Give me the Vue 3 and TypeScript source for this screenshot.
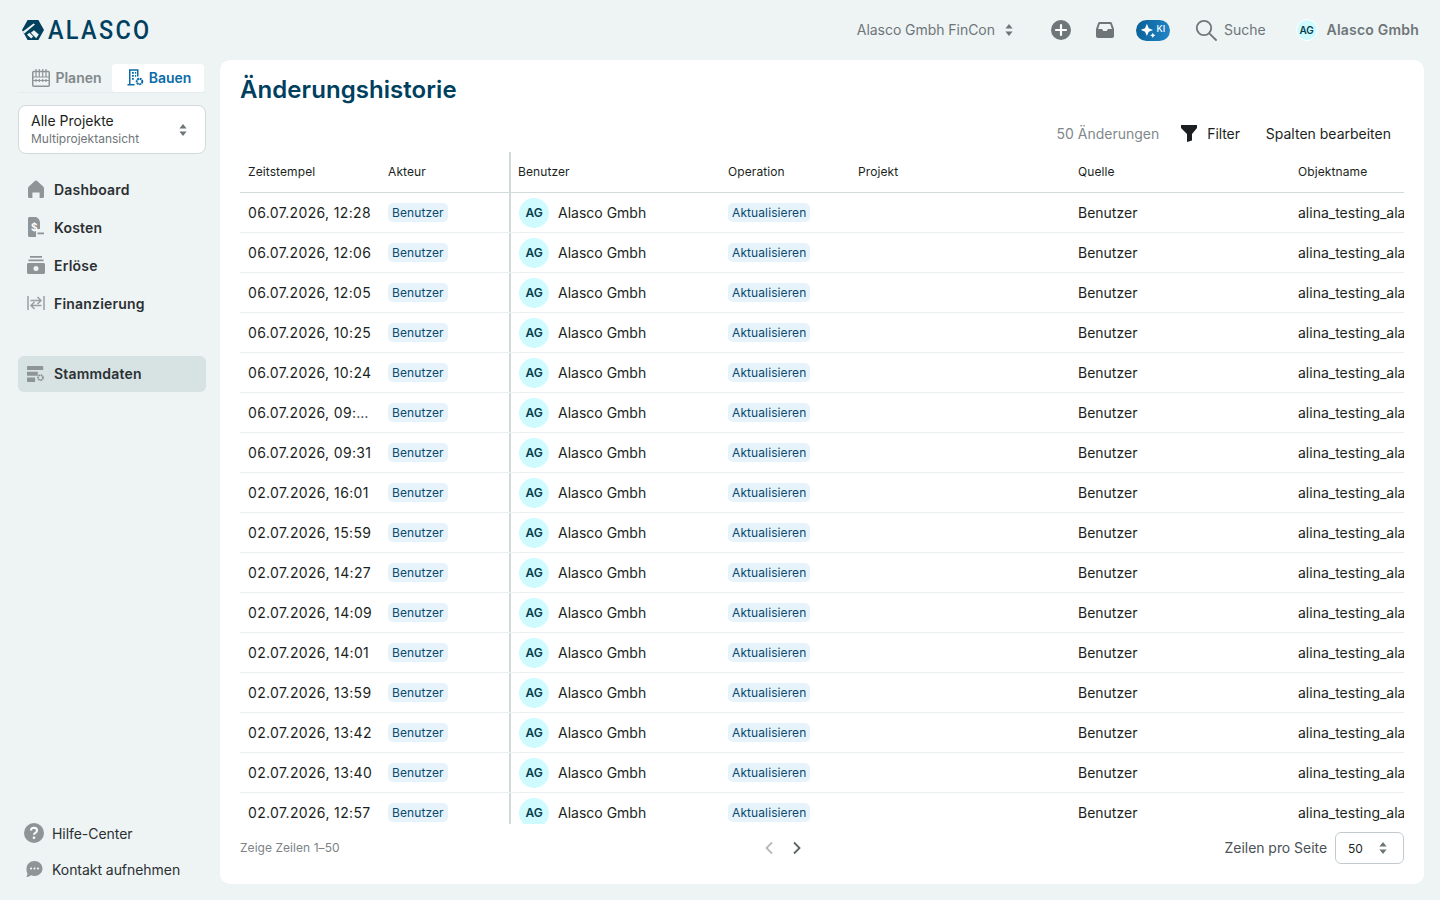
<script setup lang="ts">
const times = [
  '06.07.2026, 12:28', '06.07.2026, 12:06', '06.07.2026, 12:05', '06.07.2026, 10:25',
  '06.07.2026, 10:24', '06.07.2026, 09:…', '06.07.2026, 09:31', '02.07.2026, 16:01',
  '02.07.2026, 15:59', '02.07.2026, 14:27', '02.07.2026, 14:09', '02.07.2026, 14:01',
  '02.07.2026, 13:59', '02.07.2026, 13:42', '02.07.2026, 13:40', '02.07.2026, 12:57',
]
const columns = ['Zeitstempel', 'Akteur', 'Benutzer', 'Operation', 'Projekt', 'Quelle', 'Objektname']
</script>

<template>
  <div class="page">
    <header class="topbar">
      <div class="logo">
        <svg width="22" height="20" viewBox="0 0 22 20">
          <path fill="#00405f" d="M5.600 0h10.800L22 10l-5.600 10H5.600L0 10z" />
          <path fill="#eef3f4" d="M.6 11.800 11.500 3.400l1.500 1.200L2.300 13.600zM8.800 12.800l3.200-2.600 4.800 4.400-2.600 3.600zM5 14.800l2.400-2 3.800 3.600-2 2.200z" />
        </svg>
        <span>ALASCO</span>
      </div>
      <div class="top-right">
        <div class="tenant">
          <span>Alasco Gmbh FinCon</span>
          <svg class="updown" width="8" height="12" viewBox="0 0 8 12"><path fill="#6f7679" d="M4 0l3.600 4.400H.4zM4 12L.4 7.600h7.200z" /></svg>
        </div>
        <svg class="t-add" width="20" height="20" viewBox="0 0 20 20">
          <circle cx="10" cy="10" r="10" fill="#6f7679" />
          <path d="M10 5v10M5 10h10" stroke="#fff" stroke-width="2.200" stroke-linecap="round" />
        </svg>
        <svg class="t-inbox" width="18" height="16" viewBox="0 0 18 16">
          <path fill="#6f7679" d="M3.500 0h11c.6 0 1 .3 1.300.8L18 7v7c0 1.100-.9 2-2 2H2c-1.100 0-2-.9-2-2V7L2.200.8C2.500.3 2.900 0 3.500 0z" />
          <path fill="#eef3f4" d="M3.800 2h10.400l1.700 5H12l-1.300 2H7.300L6 7H2.100z" />
        </svg>
        <div class="ai">
          <svg width="15" height="15" viewBox="0 0 14 14">
            <path fill="#fff" d="M5.500.8 7.200 4.800l4 1.700-4 1.700-1.700 4-1.700-4-4-1.700 4-1.700zM11 9l.8 1.700 1.700.8-1.700.8L11 14l-.8-1.700-1.700-.8 1.700-.8z" />
          </svg>
          <span>KI</span>
        </div>
        <div class="search">
          <svg width="22" height="22" viewBox="0 0 22 22">
            <circle cx="9" cy="9" r="7.200" fill="none" stroke="#6f7679" stroke-width="1.800" />
            <path d="M14.300 14.300 21 21" stroke="#6f7679" stroke-width="1.800" stroke-linecap="round" />
          </svg>
          <span>Suche</span>
        </div>
        <div class="account">
          <span class="avatar small">AG</span>
          <span class="account-name">Alasco Gmbh</span>
        </div>
      </div>
    </header>

    <div class="body">
      <aside class="sidebar">
        <div class="mode">
          <div class="mode-item">
            <svg width="18" height="18" viewBox="0 0 18 18" fill="none" stroke="#8f9597" stroke-width="1.500">
              <rect x=".75" y="2.500" width="16.500" height="14.750" rx="1" />
              <path d="M4 0v8M7.300 0v8M10.700 0v8M14 0v8M1 8h16M1 11.500h16M4 10v3M7.300 10v3M10.700 10v3M14 10v3" stroke-width="1.200" />
            </svg>
            <span>Planen</span>
          </div>
          <div class="mode-item active">
            <svg width="17" height="17" viewBox="0 0 17 17">
              <path fill="none" stroke="#0a6ca8" stroke-width="1.500" d="M2.750 15.500V1h8v6.500M.5 15.800h7" />
              <path fill="#0a6ca8" d="M5 3h1.800v1.800H5zM8 3h1.200v1.800H8zM5 6h1.800v1.800H5zM8 6h1.200v1.800H8zM5 9h1.800v1.800H5z" />
              <circle cx="12.500" cy="12.500" r="2.800" fill="none" stroke="#0a6ca8" stroke-width="2" stroke-dasharray="2 .6" />
            </svg>
            <span>Bauen</span>
          </div>
        </div>

        <div class="project">
          <div class="project-text">
            <div class="project-name">Alle Projekte</div>
            <div class="project-sub">Multiprojektansicht</div>
          </div>
          <svg class="updown" width="8" height="12" viewBox="0 0 8 12"><path fill="#6f7679" d="M4 0l3.600 4.400H.4zM4 12L.4 7.600h7.200z" /></svg>
        </div>

        <nav class="nav">
          <a class="nav-item">
            <svg width="18" height="18" viewBox="0 0 18 18"><path fill="#8f9597" d="M9 .5c.6 0 1.100.3 1.500.7l5.600 5.300c.6.500.9 1.200.9 2v8c0 .9-.7 1.500-1.500 1.500h-2.900v-5.500H5.400V18H2.500C1.600 18 1 17.400 1 16.500v-8c0-.8.3-1.500.9-2l5.600-5.300C7.900.8 8.400.5 9 .5z" /></svg>
            <span>Dashboard</span>
          </a>
          <a class="nav-item">
            <svg width="18" height="20" viewBox="0 0 18 20">
              <path fill="#8f9597" d="M2.500 0H8c2.500 0 5 2.500 5 5.500V12H9v8H2.500C1.700 20 1 19.300 1 18.500v-17C1 .7 1.700 0 2.500 0z" />
              <path fill="#8f9597" d="M10.500 15.500H17v1.800h-6.500z" />
              <text x="4" y="13.500" font-size="10" font-weight="700" fill="#fff" font-family="Inter, sans-serif">$</text>
            </svg>
            <span>Kosten</span>
          </a>
          <a class="nav-item">
            <svg width="18" height="18" viewBox="0 0 18 18">
              <path fill="#8f9597" d="M3 0h12v1.700H3zM1.500 3.600h15v1.700h-15zM1.500 7h15c.8 0 1.500.7 1.500 1.500v8c0 .8-.7 1.500-1.500 1.500h-15C.7 18 0 17.300 0 16.500v-8C0 7.700.7 7 1.500 7z" />
              <circle cx="9" cy="12.500" r="2.500" fill="#eef3f4" />
            </svg>
            <span>Erlöse</span>
          </a>
          <a class="nav-item">
            <svg width="18" height="16" viewBox="0 0 18 16" fill="none" stroke="#9aa0a2" stroke-width="1.500">
              <path d="M1 1v14M17 1v14M3.500 5.500H14M10.500 2 14 5.500 10.500 9M4 10.500h10.500M7.500 7 4 10.500 7.500 14" />
            </svg>
            <span>Finanzierung</span>
          </a>
        </nav>

        <a class="nav-item master">
          <svg width="20" height="18" viewBox="0 0 20 18">
            <path fill="#8f9597" d="M1 0h16c.6 0 1 .4 1 1v3.500H0V1c0-.6.400-1 1-1zM0 6.500h12v4.500H0zM0 13h9v5H1c-.6 0-1-.4-1-1z" />
            <circle cx="15" cy="13" r="2.800" fill="none" stroke="#8f9597" stroke-width="2" stroke-dasharray="2 .6" />
          </svg>
          <span>Stammdaten</span>
        </a>

        <div class="help">
          <a class="help-item">
            <svg width="20" height="20" viewBox="0 0 20 20">
              <circle cx="10" cy="10" r="10" fill="#8f9597" />
              <path d="M7 7.500C7 5.800 8.300 4.800 10 4.800s3 1 3 2.600c0 2.300-3 2.300-3 4.300" fill="none" stroke="#fff" stroke-width="2" />
              <circle cx="10" cy="14.800" r="1.300" fill="#fff" />
            </svg>
            <span>Hilfe-Center</span>
          </a>
          <a class="help-item">
            <svg width="20" height="18" viewBox="0 0 20 18">
              <path fill="#8f9597" d="M10.500 1c4.400 0 8 3.200 8 7.500s-3.600 7.500-8 7.500c-1.300 0-2.500-.3-3.500-.8C5.800 16.300 4 17 2.400 17c.7-1 1.100-2.200 1.100-3.500-.9-1.300-1-3.200-1-5C2.500 4.200 6.100 1 10.500 1z" />
              <circle cx="7" cy="8.500" r="1" fill="#fff" /><circle cx="10.500" cy="8.500" r="1" fill="#fff" /><circle cx="14" cy="8.500" r="1" fill="#fff" />
            </svg>
            <span>Kontakt aufnehmen</span>
          </a>
        </div>
      </aside>

      <main class="card">
        <h1>Änderungshistorie</h1>
        <div class="toolbar">
          <span class="count">50 Änderungen</span>
          <span class="tool filter">
            <svg width="16" height="17" viewBox="0 0 16 17"><path fill="#1b1f21" d="M0 0h16v3l-5 6v6.500L6 17V9L0 3z" /></svg>
            Filter
          </span>
          <span class="tool edit">Spalten bearbeiten</span>
        </div>

        <div class="table">
          <div class="row head">
            <div v-for="c in columns" :key="c" class="cell" :class="{ split: c === 'Benutzer' }">{{ c }}</div>
          </div>
          <div class="rows">
            <div v-for="(t, i) in times" :key="i" class="row">
              <div class="cell time">{{ t }}</div>
              <div class="cell"><span class="chip">Benutzer</span></div>
              <div class="cell split user"><span class="avatar">AG</span>Alasco Gmbh</div>
              <div class="cell"><span class="chip">Aktualisieren</span></div>
              <div class="cell"></div>
              <div class="cell">Benutzer</div>
              <div class="cell obj">alina_testing_alasco</div>
            </div>
          </div>
        </div>

        <footer class="pager">
          <span class="range">Zeige Zeilen 1–50</span>
          <div class="arrows">
            <svg width="10" height="14" viewBox="0 0 10 14" fill="none" stroke="#b4b9bb" stroke-width="1.800"><path d="M8 1.500 2.500 7 8 12.500" /></svg>
            <svg width="10" height="14" viewBox="0 0 10 14" fill="none" stroke="#5b6265" stroke-width="1.800"><path d="M2 1.500 7.500 7 2 12.500" /></svg>
          </div>
          <div class="per-page">
            <span>Zeilen pro Seite</span>
            <div class="select">
              <span>50</span>
              <svg class="updown" width="8" height="12" viewBox="0 0 8 12"><path fill="#6f7679" d="M4 0l3.600 4.400H.4zM4 12L.4 7.600h7.200z" /></svg>
            </div>
          </div>
        </footer>
      </main>
    </div>
  </div>
</template>

<style>
html, body { margin: 0; background: #eef3f4; }
</style>

<style scoped>
.page {
  width: 1440px;
  height: 900px;
  overflow: hidden;
  display: flex;
  flex-direction: column;
  background: #eef3f4;
  color: #1b1f21;
  font-family: Inter, "Liberation Sans", sans-serif;
  font-size: 14px;
}

.topbar {
  height: 60px;
  flex: none;
  display: flex;
  align-items: center;
  justify-content: space-between;
  padding: 0 21px 0 22px;
}
.logo { display: flex; align-items: center; gap: 4px; color: #00405f; }
.logo span {
  font-family: Roboto, sans-serif;
  font-size: 26px;
  font-weight: 500;
  letter-spacing: 2.600px;
  line-height: 1;
  display: inline-block;
  transform: scaleX(.9);
  transform-origin: left center;
}
.top-right { display: flex; align-items: center; color: #6f7679; font-weight: 500; }
.top-right span { margin-top: -2px; }
.tenant { display: flex; align-items: center; gap: 10px; font-weight: 400; letter-spacing: -.05px; }
.t-add { margin-left: 38px; }
.t-inbox { margin-left: 25px; }
.ai {
  margin-left: 22px;
  width: 34px;
  height: 21px;
  border-radius: 11px;
  background: linear-gradient(100deg, #0a5f97, #2186c8);
  display: flex;
  align-items: center;
  justify-content: center;
  gap: 1px;
  color: #fff;
  font-size: 9px;
  box-sizing: border-box;
}
.ai span { margin-top: -4px; }
.search { margin-left: 25px; display: flex; align-items: center; gap: 7px; font-weight: 400; }
.account { margin-left: 30px; display: flex; align-items: center; gap: 9px; font-weight: 600; }
.account-name { letter-spacing: .2px; }

.avatar {
  width: 30px;
  height: 30px;
  border-radius: 50%;
  background: #cffafe;
  color: #063f4f;
  display: inline-flex;
  align-items: center;
  justify-content: center;
  font-size: 12px;
  font-weight: 600;
  flex: none;
}
.top-right .avatar.small {
  width: 22px;
  height: 22px;
  margin-top: 0;
  font-size: 10px;
  border: 1px solid #fff;
  box-sizing: border-box;
}

.body { flex: 1; display: flex; min-height: 0; }

.sidebar {
  width: 188px;
  flex: none;
  padding: 4px 14px 21px 18px;
  display: flex;
  flex-direction: column;
}
.mode {
  display: flex;
  height: 28px;
  padding: 0 2px;
  border-bottom: 1px solid #e6ecee;
}
.mode-item {
  width: 92px;
  display: flex;
  align-items: center;
  justify-content: center;
  gap: 5px;
  padding: 0 0 1px 2px;
  box-sizing: border-box;
  color: #81888b;
  font-weight: 600;
  border-radius: 3px;
}
.mode-item.active { background: #fff; color: #0a6ca8; }

.project {
  margin-top: 12px;
  height: 47px;
  border: 1px solid #d3dadc;
  border-radius: 8px;
  background: #fff;
  display: flex;
  align-items: center;
  justify-content: space-between;
  padding: 0 18px 0 12px;
}
.project-name { font-size: 14px; line-height: 18px; }
.project-sub { font-size: 12px; line-height: 17px; color: #6f7679; }

.nav { margin-top: 17px; display: flex; flex-direction: column; gap: 2px; }
.nav-item {
  height: 36px;
  display: flex;
  align-items: center;
  padding-left: 9px;
  border-radius: 6px;
  font-weight: 600;
  letter-spacing: .2px;
  color: #2b3033;
  gap: 9px;
}
.nav-item svg { width: 18px; flex: none; }
.master { margin-top: 35px; background: #d7e2e3; }
.master span { margin-top: -2px; }

.help { margin-top: auto; display: flex; flex-direction: column; gap: 16px; padding-left: 6px; }
.help-item { height: 20px; display: flex; align-items: center; gap: 8px; color: #2b3033; letter-spacing: -.05px; }

.card {
  width: 1204px;
  height: 824px;
  flex: none;
  box-sizing: border-box;
  padding: 0 20px;
  background: #fff;
  border-radius: 10px;
  display: flex;
  flex-direction: column;
}
h1 {
  margin: 0;
  padding-top: 15px;
  font-size: 24px;
  line-height: 30px;
  font-weight: 600;
  letter-spacing: .06px;
  color: #00405f;
}
.toolbar {
  margin-top: 18px;
  height: 20px;
  display: flex;
  align-items: center;
  justify-content: flex-end;
  padding-right: 13px;
}
.count { font-size: 14px; color: #81888b; }
.tool { display: flex; align-items: center; gap: 10px; margin-left: 22px; }
.filter { letter-spacing: -.1px; }
.edit { margin-left: 26px; }

.table { margin-top: 9px; height: 672px; overflow: hidden; flex: none; }
.rows { height: 631px; overflow: hidden; }
.row {
  display: grid;
  grid-template-columns: 140px 130px 210px 130px 220px 220px 220px;
  width: 1270px;
  height: 40px;
  border-bottom: 1px solid #eaf0f1;
  box-sizing: border-box;
}
.head { height: 41px; border-bottom-color: #d3dadc; }
.cell {
  padding: 0 8px;
  display: flex;
  align-items: center;
  white-space: nowrap;
  overflow: hidden;
}
.head .cell { font-size: 12px; letter-spacing: .1px; padding-bottom: 2px; }
.split { border-left: 2px solid #d3dadc; margin-left: -1px; padding-left: 7px; }
.user { gap: 9px; padding-left: 8px; }
.time { letter-spacing: .35px; }
.chip {
  height: 19px;
  line-height: 19px;
  padding: 0 4px;
  border-radius: 5px;
  background: #e6f3fb;
  color: #0b4a6f;
  font-size: 12px;
  letter-spacing: .1px;
}

.pager {
  flex: 1;
  display: flex;
  justify-content: space-between;
  align-items: center;
  padding-bottom: 12px;
}
.range { font-size: 12px; letter-spacing: .05px; color: #7c8386; margin-top: -2px; }
.arrows { display: flex; gap: 18px; margin-left: 2px; }
.per-page { display: flex; align-items: center; justify-content: flex-end; gap: 8px; color: #4b5154; letter-spacing: -.05px; }
.per-page > span { margin-top: -2px; }
.select {
  width: 69px;
  height: 32px;
  box-sizing: border-box;
  border: 1px solid #c4cbce;
  border-radius: 6px;
  display: flex;
  align-items: center;
  justify-content: space-between;
  padding: 0 16px 0 12px;
  font-size: 12px;
  color: #1b1f21;
}
</style>
